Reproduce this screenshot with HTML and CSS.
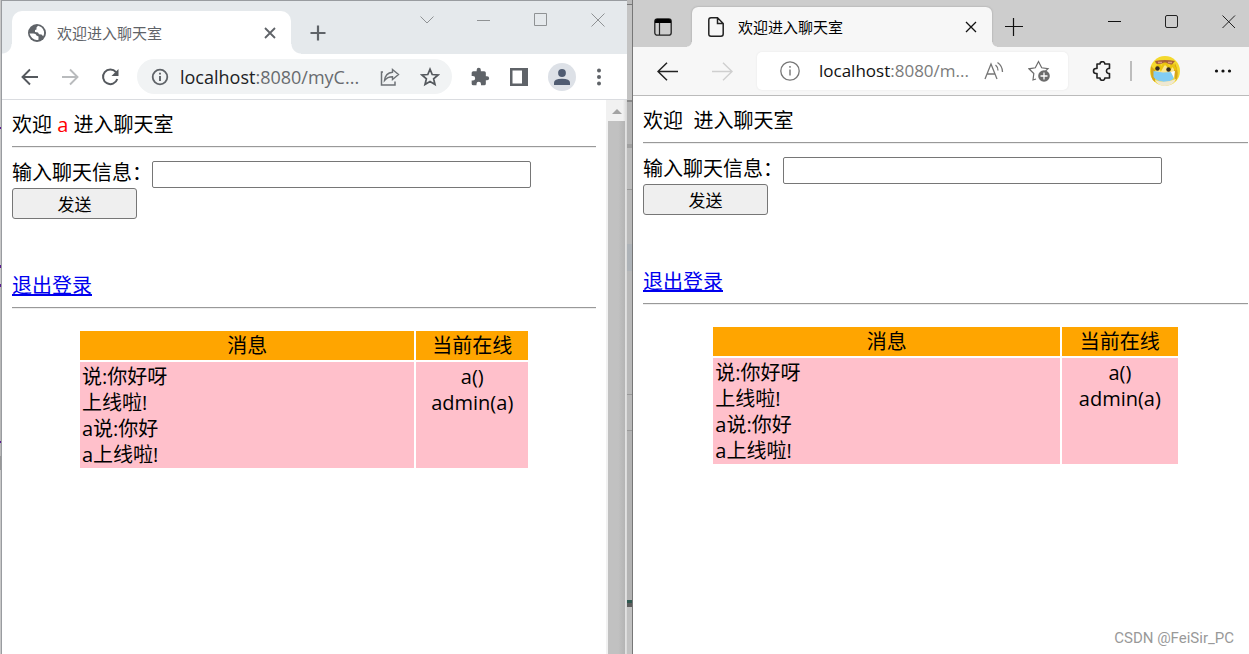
FILE: index.html
```html
<!DOCTYPE html>
<html lang="zh-CN">
<head>
<meta charset="utf-8">
<title>欢迎进入聊天室</title>
<link rel="stylesheet" href="styles.css">
</head>
<body>
<main class="desktop">
  <div class="backdrop backdrop-left"></div>

  <section class="window chrome">
    <header class="tabstrip">
      <div class="tab">
        <svg class="icon" width="20" height="20" viewBox="0 0 20 20"><circle cx="10" cy="10" r="9" fill="#5f6368"/><path d="M2.500 10.500L6.500 10.500Q9 10.500 9.500 12.500L11.500 13.500V16.800Q5 18 2.500 10.500ZM11 2.700Q15.500 3.500 17 8.500Q17.500 11 16.200 13.200L14.500 11.500L12 11.300L11 9.500L8 9V7L9.500 6.500V4.500Z" fill="#fff"/></svg>
        <span class="tab-title">欢迎进入聊天室</span>
        <button class="btn tab-close" aria-label="关闭标签页"><svg width="12" height="12" viewBox="0 0 12 12"><path d="M1 1L11 11M11 1L1 11" stroke="#5f6368" stroke-width="1.8"/></svg></button>
      </div>
      <button class="btn new-tab" aria-label="新标签页"><svg width="16" height="16" viewBox="0 0 16 16"><path d="M8 .5V15.500M.5 8H15.500" stroke="#5f6368" stroke-width="2.200"/></svg></button>
      <div class="captions">
        <button class="btn" aria-label="搜索标签页"><svg width="14" height="14" viewBox="0 0 14 14"><path d="M.5 3.500L7 10L13.500 3.500" fill="none" stroke="#8f9294"/></svg></button>
        <button class="btn" aria-label="最小化"><svg width="14" height="14" viewBox="0 0 14 14"><path d="M0 7.500H13" stroke="#8f9294"/></svg></button>
        <button class="btn" aria-label="最大化"><svg width="14" height="14" viewBox="0 0 14 14"><path d="M.5.5H12.500V12.500H.5Z" fill="none" stroke="#8f9294"/></svg></button>
        <button class="btn" aria-label="关闭"><svg width="14" height="14" viewBox="0 0 14 14"><path d="M.5.5L13.500 13.500M13.500.5L.5 13.500" stroke="#8f9294"/></svg></button>
      </div>
    </header>
    <nav class="toolbar">
      <button class="btn" aria-label="后退"><svg width="18" height="18" viewBox="0 0 18 18"><path d="M17 9H2M9 1.500L1.500 9L9 16.500" fill="none" stroke="#55595e" stroke-width="1.900"/></svg></button>
      <button class="btn" aria-label="前进"><svg width="18" height="18" viewBox="0 0 18 18"><path d="M1 9H16M9 1.500L16.500 9L9 16.500" fill="none" stroke="#b9bbbd" stroke-width="1.900"/></svg></button>
      <button class="btn" aria-label="刷新"><svg width="18" height="18" viewBox="0 0 18 18"><path d="M15 4.200A7.300 7.300 0 1 0 16.300 11" fill="none" stroke="#55595e" stroke-width="2"/><path d="M17.500 1V8H10.500Z" fill="#55595e"/></svg></button>
      <div class="address">
        <svg class="icon" width="18" height="18" viewBox="0 0 18 18"><circle cx="9" cy="9" r="7.300" fill="none" stroke="#5f6368" stroke-width="1.800"/><path d="M9 8V13M9 4.800V6.600" stroke="#5f6368" stroke-width="1.900"/></svg>
        <div class="url" role="textbox" aria-label="地址栏" contenteditable="true" spellcheck="false"><span class="host">localhost</span>:8080/myC...</div>
        <button class="btn" aria-label="分享"><svg width="20" height="20" viewBox="0 0 20 20"><path d="M3 5H1.500V18H15V14.500" fill="none" stroke="#6d7175" stroke-width="1.500"/><path d="M12.500 2.500L18.500 7.500L12.500 12.500V9.800C9 9.800 6.500 11 4.500 13.500C5 9 8 5.600 12.500 5.200Z" fill="none" stroke="#6d7175" stroke-width="1.400"/></svg></button>
        <button class="btn" aria-label="收藏"><svg width="20" height="20" viewBox="0 0 20 20"><path d="M10 2.200L12.200 7.500L18 8L13.600 11.800L15 17.500L10 14.500L5 17.500L6.400 11.800L2 8L7.800 7.500Z" fill="none" stroke="#55595e" stroke-width="1.700"/></svg></button>
      </div>
      <button class="btn" aria-label="扩展程序"><svg width="20" height="20" viewBox="0 0 24 24"><path d="M20.500 11H19V7a2 2 0 0 0-2-2h-4V3.500a2.500 2.500 0 0 0-5 0V5H4a2 2 0 0 0-2 2v3.800h1.500a2.700 2.700 0 0 1 0 5.400H2V20a2 2 0 0 0 2 2h3.800v-1.500a2.700 2.700 0 0 1 5.400 0V22H17a2 2 0 0 0 2-2v-4h1.500a2.500 2.500 0 0 0 0-5Z" fill="#5f6368"/></svg></button>
      <button class="btn" aria-label="侧边栏"><svg width="18" height="18" viewBox="0 0 18 18"><path d="M0 0H18V18H0ZM2.500 2.500V15.500H12V2.500Z" fill="#5f6368" fill-rule="evenodd"/></svg></button>
      <button class="btn" aria-label="个人资料"><svg width="28" height="28" viewBox="0 0 28 28"><circle cx="14" cy="14" r="14" fill="#dde1e7"/><circle cx="14" cy="10" r="3.900" fill="#505c72"/><path d="M6 22V19.500Q6 16 14 15.800Q22 16 22 19.500V22Z" fill="#505c72"/></svg></button>
      <button class="btn" aria-label="菜单"><svg width="6" height="18" viewBox="0 0 6 18"><g fill="#5f6368"><circle cx="3" cy="2.500" r="2"/><circle cx="3" cy="9" r="2"/><circle cx="3" cy="15.500" r="2"/></g></svg></button>
    </nav>
    <div class="viewport">
      <article class="page">
        <div class="line">欢迎 <span class="user">a</span> 进入聊天室</div>
        <hr class="rule">
        <form class="chat-form">
          <label for="msg1">输入聊天信息：</label><input class="msg" id="msg1" type="text">
          <button class="send" type="button">发送</button>
        </form>
        <a class="logout" href="#">退出登录</a>
        <hr class="rule">
        <table class="log">
          <thead><tr><th class="col-msg">消息</th><th>当前在线</th></tr></thead>
          <tbody><tr><td>说:你好呀<br>上线啦!<br>a说:你好<br>a上线啦!</td><td class="online">a()<br>admin(a)</td></tr></tbody>
        </table>
      </article>
      <div class="scrollbar"><svg width="10" height="5" viewBox="0 0 10 5"><path d="M0 5L5 0L10 5Z" fill="#a3a3a3"/></svg><div class="thumb"></div></div>
    </div>
  </section>

  <div class="backdrop backdrop-mid"></div>

  <section class="window edge">
    <header class="tabstrip">
      <button class="btn tab-menu" aria-label="标签操作菜单"><svg width="18" height="18" viewBox="0 0 18 18"><rect x=".8" y=".8" width="16.400" height="16.400" rx="2.500" fill="none" stroke="#222" stroke-width="1.300"/><path d="M1 5V3Q1 1 3 1H15Q17 1 17 3V5Z" fill="#000"/><path d="M5.500 5V17" stroke="#222" stroke-width="1.200"/></svg></button>
      <div class="tab">
        <svg class="icon" width="16" height="20" viewBox="0 0 16 20"><path d="M3 .8H9.500L15.200 6.500V17Q15.200 19.200 13 19.200H3Q.8 19.200 .8 17V3Q.8 .8 3 .8ZM9.500 1V6.500H15" fill="none" stroke="#222" stroke-width="1.500"/></svg>
        <span class="tab-title">欢迎进入聊天室</span>
        <button class="btn tab-close" aria-label="关闭标签页"><svg width="12" height="12" viewBox="0 0 12 12"><path d="M1 1L11 11M11 1L1 11" stroke="#111" stroke-width="1.300"/></svg></button>
      </div>
      <button class="btn new-tab" aria-label="新标签页"><svg width="18" height="18" viewBox="0 0 18 18"><path d="M8.500 0V18M0 8.500H18" stroke="#111" stroke-width="1.200"/></svg></button>
      <div class="captions">
        <button class="btn" aria-label="最小化"><svg width="14" height="14" viewBox="0 0 14 14"><path d="M0 6.500H13" stroke="#111"/></svg></button>
        <button class="btn" aria-label="最大化"><svg width="14" height="14" viewBox="0 0 14 14"><rect x=".5" y=".5" width="12" height="12" rx="1.500" fill="none" stroke="#222"/></svg></button>
        <button class="btn" aria-label="关闭"><svg width="14" height="14" viewBox="0 0 14 14"><path d="M.5.5L13 13M13 .5L.5 13" stroke="#222"/></svg></button>
      </div>
    </header>
    <nav class="toolbar">
      <button class="btn" aria-label="后退"><svg width="21" height="19" viewBox="0 0 21 19"><path d="M21 9.500H1M10 .8L1 9.500L10 18.200" fill="none" stroke="#222" stroke-width="1.500"/></svg></button>
      <button class="btn" aria-label="前进"><svg width="21" height="19" viewBox="0 0 21 19"><path d="M0 9.500H20M11 .8L20 9.500L11 18.200" fill="none" stroke="#cfcfcf" stroke-width="1.400"/></svg></button>
      <div class="address">
        <svg class="icon" width="20" height="20" viewBox="0 0 20 20"><circle cx="10" cy="10" r="9.200" fill="none" stroke="#767676" stroke-width="1.300"/><path d="M10 8.500V14.500M10 5V6.700" stroke="#767676" stroke-width="1.400"/></svg>
        <div class="url" role="textbox" aria-label="地址栏" contenteditable="true" spellcheck="false"><span class="host">localhost</span>:8080/m...</div>
        <button class="btn" aria-label="朗读"><svg width="20" height="20" viewBox="0 0 20 20"><path d="M1 18L7 3L13 18M3 13H11" fill="none" stroke="#767676" stroke-width="1.300"/><path d="M11.500 4Q14 6 14 9.500M13.500 1.500Q18.500 5 18.500 11" fill="none" stroke="#767676" stroke-width="1.300"/></svg></button>
        <button class="btn" aria-label="收藏"><svg width="22" height="22" viewBox="0 0 22 22"><path d="M8 19L5 20L5.800 13.500L1 8.800L7.300 7.800L10.500 1.500L13.700 7.800L20 8.700L17.500 11" fill="none" stroke="#6c6c6c" stroke-width="1.200"/><circle cx="16" cy="16" r="5.800" fill="#6c6c6c"/><path d="M16 12.500V19.500M12.500 16H19.500" stroke="#fff" stroke-width="1.300"/></svg></button>
      </div>
      <button class="btn" aria-label="扩展"><svg width="20" height="20" viewBox="0 0 20 20"><path d="M5 3H8A2.400 2.400 0 0 1 12.800 3H17.500V7.500H16.300A2.600 2.600 0 0 0 16.300 12.500H17.500V17H12.800A2.400 2.400 0 0 1 8 17H5V12.500H4A2.500 2.500 0 0 1 4 7.500H5Z" fill="none" stroke="#222" stroke-width="1.600" stroke-linejoin="round"/></svg></button>
      <span class="divider"></span>
      <button class="btn" aria-label="个人资料"><svg width="30" height="30" viewBox="0 0 30 30"><circle cx="15" cy="15" r="15" fill="#f4d92f"/><path d="M1 10Q0 24 5 26L5 14ZM25 7Q30 18 26 25L23 16Z" fill="#d6a51c"/><path d="M6 12Q14 7 24 12V22L14 24L5 20Z" fill="#fae58e"/><path d="M5 14L9 8L11 13L15 6L20 13L22 8L26 14" fill="none" stroke="#eac40f" stroke-width="2.500"/><path d="M5 5Q15 3 25 5L22 8.500Q19 9 16 6.500H14Q10 9 6 7.500Z" fill="#a76038"/><path d="M8 6.500H12M18 6.500H22" stroke="#dc9a78" stroke-width="1.500"/><circle cx="7.500" cy="12.500" r="2.200" fill="#342b20"/><circle cx="18.500" cy="13.500" r="2.200" fill="#342b20"/><path d="M3.500 15L13 16.500L21 16L24 22Q21 26 14 26Q6 25 3.500 21Z" fill="#82cdf4"/><path d="M21 16L25 15L24 22" fill="#fff"/><path d="M5 24Q14 28 26 23Q23 30 15 30Q8 30 5 24Z" fill="#efe8d2"/></svg></button>
      <button class="btn" aria-label="设置及其他"><svg width="18" height="6" viewBox="0 0 18 6"><g fill="#111"><circle cx="2.500" cy="3" r="1.600"/><circle cx="9" cy="3" r="1.600"/><circle cx="15.500" cy="3" r="1.600"/></g></svg></button>
    </nav>
    <div class="viewport">
      <article class="page">
        <div class="line">欢迎 &nbsp;进入聊天室</div>
        <hr class="rule">
        <form class="chat-form">
          <label for="msg2">输入聊天信息：</label><input class="msg" id="msg2" type="text">
          <button class="send" type="button">发送</button>
        </form>
        <a class="logout" href="#">退出登录</a>
        <hr class="rule">
        <table class="log">
          <thead><tr><th class="col-msg">消息</th><th>当前在线</th></tr></thead>
          <tbody><tr><td>说:你好呀<br>上线啦!<br>a说:你好<br>a上线啦!</td><td class="online">a()<br>admin(a)</td></tr></tbody>
        </table>
      </article>
    </div>
  </section>
  <div class="watermark">CSDN @FeiSir_PC</div>
</main>
</body>
</html>
```

FILE: styles.css
```css
* { box-sizing: border-box; }

body {
  margin: 0;
  font-family: "Open Sans", "Noto Sans CJK SC", sans-serif;
  font-size: 20px;
  line-height: 26px;
  color: #000;
}

.desktop {
  position: relative;
  display: grid;
  grid-template-columns: 1px 626fr 5px 617fr;
  height: 100vh;
  overflow: hidden;
}

.btn {
  display: flex;
  align-items: center;
  justify-content: center;
  flex: none;
  padding: 0;
  border: 0;
  background: none;
}
.btn svg, .icon { display: block; flex: none; }

/* Strips of the desktop behind the windows */
.backdrop-left {
  background: linear-gradient(#c8c8c8 0 127px, #5b1c91 127px 129px, #c8c8c8 129px 265px, #5b1c91 265px 268px, #c8c8c8 268px 284px, #5b1c91 284px 287px, #b8b8b8 287px 441px, #5b1c91 441px 443px, #b8b8b8 443px 456px, #999 456px 470px, #c8c8c8 470px);
}
.backdrop-mid {
  background: linear-gradient(#bbb 0 4px, #777 4px 5px, #c4c4c4 5px 100px, #8a8a8a 100px 102px, #b4b4b4 102px 144px, #a0a0a0 144px 148px, #bcbcbc 148px 189px, #999 189px 190px, #b9b9b9 190px 244px, #aeb3b8 244px 271px, #b9b9b9 271px 394px, #999 394px 395px, #b9b9b9 395px 430px, #999 430px 431px, #b3b3b3 431px 600px, #2f5850 600px 603px, #5c5c5c 603px 607px, #c2c2c2 607px);
}

.window {
  display: flex;
  flex-direction: column;
  min-width: 0;
  background: #fff;
}
.tabstrip { display: flex; flex: none; }
.tab { position: relative; display: flex; align-items: center; flex: none; }
.tab-title { flex: 1; font-size: 15px; }
.toolbar { display: flex; align-items: center; flex: none; }
.captions { display: flex; margin-left: auto; }
.address { display: flex; align-items: center; flex: 1; min-width: 0; }
.url {
  flex: 1;
  min-width: 0;
  overflow: hidden;
  white-space: nowrap;
}

/* Flared feet of the active tab */
.tab::before, .tab::after {
  content: "";
  position: absolute;
  bottom: 0;
  width: 10px;
  height: 10px;
}
.tab::before { right: 100%; background: radial-gradient(circle at 0 0, transparent 9px, #fff 10px); }
.tab::after { left: 100%; background: radial-gradient(circle at 100% 0, transparent 9px, #fff 10px); }
.edge .tab::before { width: 5px; height: 5px; background: radial-gradient(circle at 0 0, transparent 4px, #f7f7f7 5px); }
.edge .tab::after { width: 5px; height: 5px; background: radial-gradient(circle at 100% 0, transparent 4px, #f7f7f7 5px); }

/* Left window */
.chrome { border: solid #999ca0; border-width: 1px 0 0 1px; }
.chrome .tabstrip { height: 53px; padding-left: 10px; background: #e5e9ec; }
.chrome .tab {
  width: 279px;
  margin-top: 10px;
  padding: 0 15px;
  gap: 10px;
  border-radius: 10px 10px 0 0;
  background: #fff;
  color: #5f6368;
}
.chrome .new-tab { width: 54px; margin-top: 10px; }
.chrome .captions { gap: 43px; height: 38px; padding-right: 22px; }
.chrome .toolbar {
  height: 46px;
  padding: 0 27px 0 19px;
  gap: 22px;
  border-bottom: 1px solid #dadce0;
}
.chrome .toolbar > .address {
  height: 35px;
  padding: 0 12px 0 14px;
  gap: 20px;
  margin: 0 -4px;
  border-radius: 18px;
  background: #f1f3f4;
}
.chrome .address ~ .btn { margin-right: -2px; }
.chrome .address .icon { margin-right: -9px; }
.chrome .url { margin-right: -14px; font-size: 18px; color: #686b6f; }
.host { color: #202124; }

/* Right window */
.edge { border-left: 1px solid #777; }
.edge .tabstrip { height: 47px; background: #cdcdcd; }
.edge .tab-menu { width: 59px; padding-top: 7px; }
.edge .tab {
  width: 300px;
  margin-top: 7px;
  padding: 0 15px 0 16px;
  gap: 14px;
  border-radius: 6px 6px 0 0;
  background: #f7f7f7;
  box-shadow: 0 0 2px #999;
}
.edge .new-tab { width: 44px; padding-top: 7px; }
.edge .captions { gap: 43px; height: 44px; padding-right: 13px; }
.edge .toolbar {
  position: relative;
  height: 49px;
  padding: 0 17px 0 24px;
  gap: 24px;
  background: #f7f7f7;
  border-bottom: 1px solid #bbb;
}
.edge .toolbar > .btn + .btn { margin-left: 10px; }
.edge .address {
  height: 38px;
  padding: 0 18px 0 23px;
  gap: 24px;
  border-radius: 5px;
  background: #fff;
  box-shadow: 0 0 2px #e4e4e4;
}
.edge .address .icon { margin-right: -5px; }
.edge .url { margin-right: -16px; font-size: 17px; color: #7b7b7b; }
.edge .host { color: #111; }
.divider { width: 2px; height: 20px; margin: 0 -6px; background: #bdbdbd; }

/* Chat page */
.viewport { display: flex; flex: 1; min-height: 0; }
.page { flex: 1; min-width: 0; padding: 12px 10px 0; }
.edge .page { padding-right: 1px; }
.user { color: #f00; }
.rule {
  height: 2px;
  margin: 8px 0 9px;
  border: solid;
  border-width: 1px 0;
  border-color: #999 #eee #eee;
}
.chat-form { display: block; padding-top: 4px; }
.chat-form label { display: inline-block; width: 140px; vertical-align: top; line-height: 24px; }
.msg {
  width: 379px;
  height: 27px;
  padding: 1px 2px;
  border: 1px solid #767676;
  border-radius: 2px;
  font: inherit;
  vertical-align: top;
}
.send {
  display: block;
  width: 125px;
  height: 31px;
  padding: 2px 0 0;
  border: 1px solid #767676;
  border-radius: 3px;
  background: #efefef;
  font: inherit;
  font-size: 17px;
  color: #000;
}
.logout {
  display: block;
  width: max-content;
  margin-top: 54px;
  color: #00e;
  text-decoration: underline;
}
.log {
  width: 77.4%;
  margin: 20px auto 0;
  border-spacing: 2px;
  table-layout: fixed;
}
.log th, .log td { padding: 2px 2px 0; vertical-align: top; }
.log th { height: 29px; font-weight: 400; background: #ffa500; }
.log td { height: 106px; background: #ffc0cb; }
.col-msg { width: 75%; }
.log .online { text-align: center; }

.scrollbar {
  display: flex;
  flex-direction: column;
  align-items: center;
  flex: none;
  width: 21px;
  padding: 9px 2px 0;
  gap: 7px;
  background: linear-gradient(90deg, #f1f1f1 80%, #d8d8d8);
}
.thumb {
  align-self: stretch;
  flex: 1;
  background: linear-gradient(90deg, #c1c1c1 60%, #b4b4b4);
}

.watermark {
  position: absolute;
  right: 15px;
  bottom: 7px;
  font-family: Roboto, sans-serif;
  font-size: 15px;
  line-height: 18px;
  color: #999;
}
```
